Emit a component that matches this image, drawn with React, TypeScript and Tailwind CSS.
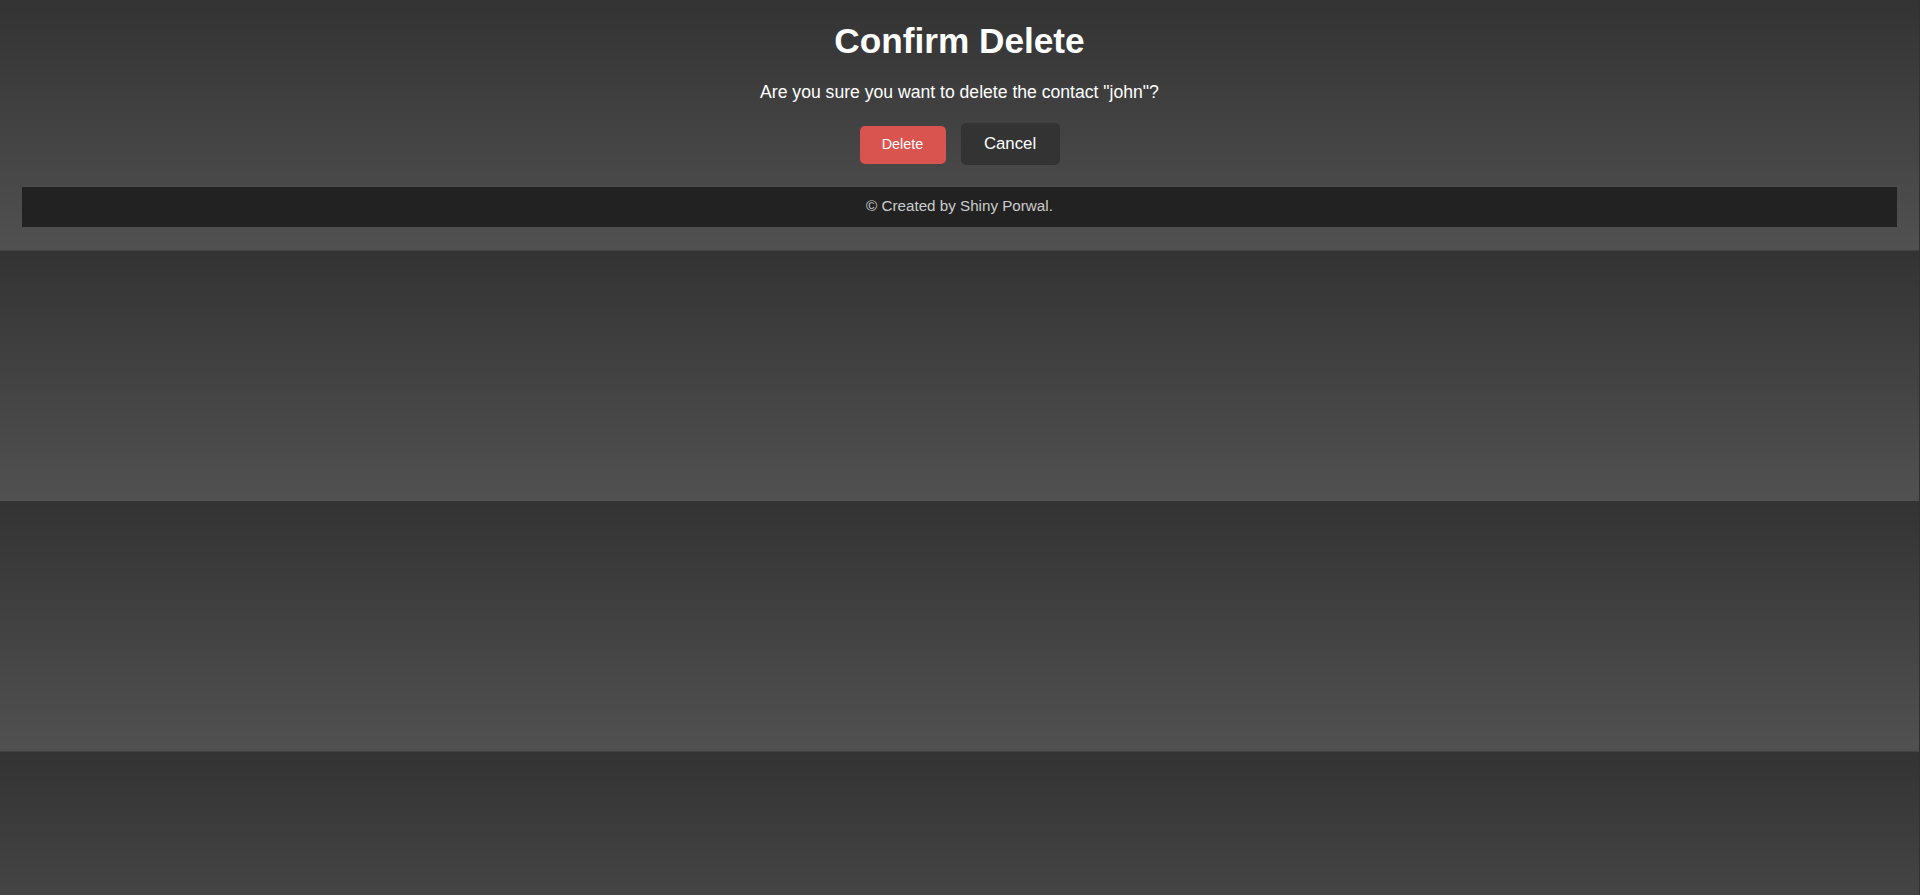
export default function App() {
  return (
    <div className="min-h-screen bg-[#323232] font-['Liberation_Sans',Arial,sans-serif]">
      <div className="mr-px min-h-screen bg-[linear-gradient(to_bottom,#333333,#515151)] bg-[length:100%_250.5px] bg-repeat">
        <div className="flex flex-col items-center px-[22px] pt-[21px]">
          {/* Heading */}
          <h1 className="text-[35.2px] font-bold leading-[1.149] text-white">Confirm Delete</h1>
          <p className="mt-[21px] text-[17.6px] leading-[1.149] text-white">
            Are you sure you want to delete the contact "john"?
          </p>

          {/* Actions */}
          <div className="mt-[20px] flex items-start gap-[15px]">
            <button className="mt-[3px] h-[38px] w-[86px] rounded-[5px] bg-[#d9534f] text-[14.4px] text-white">
              Delete
            </button>
            <button className="h-[42px] w-[99px] rounded-[5px] bg-[#333333] text-[16.8px] text-white">
              Cancel
            </button>
          </div>

          {/* Footer */}
          <footer className="mt-[22px] flex h-10 w-full items-center justify-center bg-[#222222]">
            <span className="text-[15.2px] text-[#cccccc]">© Created by Shiny Porwal.</span>
          </footer>
        </div>
      </div>
    </div>
  )
}
